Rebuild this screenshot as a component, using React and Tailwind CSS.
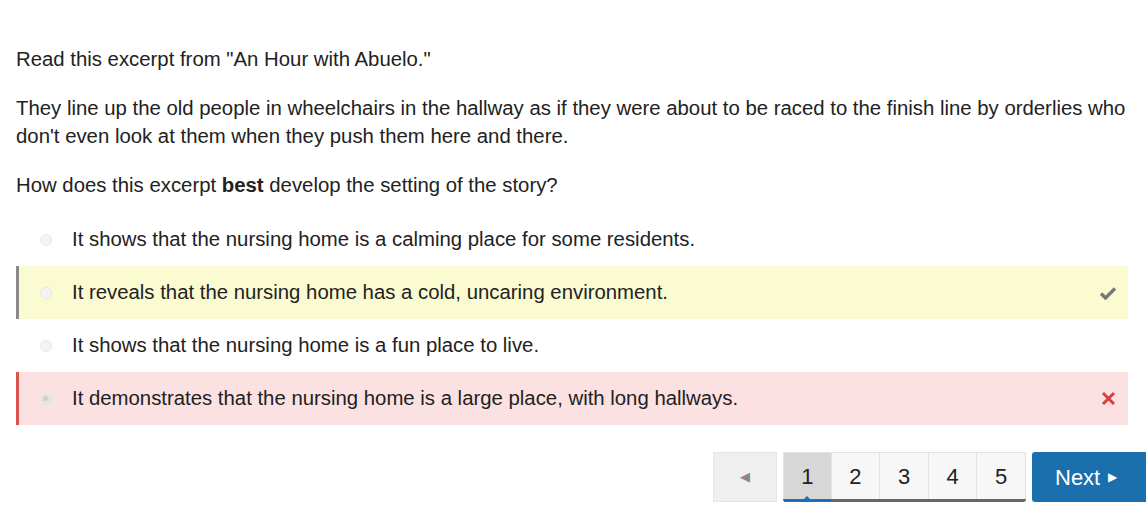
import React from 'react'

const options = [
  { text: 'It shows that the nursing home is a calming place for some residents.', state: 'none' },
  { text: 'It reveals that the nursing home has a cold, uncaring environment.', state: 'correct' },
  { text: 'It shows that the nursing home is a fun place to live.', state: 'none' },
  { text: 'It demonstrates that the nursing home is a large place, with long hallways.', state: 'wrong' },
]

function Option({ text, state }) {
  const rowCls =
    state === 'correct'
      ? 'bg-[#fbfbd2] border-l-[3px] border-[#8a8a8a]'
      : state === 'wrong'
      ? 'bg-[#fbe1e1] border-l-[3px] border-[#d9534f]'
      : 'border-l-[3px] border-transparent'
  return (
    <div className={`flex items-center h-[53px] ${rowCls}`}>
      <div className="w-[53px] flex justify-center shrink-0">
        <span
          className={`w-[12px] h-[12px] rounded-full border border-[#e8e8e8] ${
            state === 'wrong' ? 'bg-[#e4e4e4]' : 'bg-[#f4f4f4]'
          } flex items-center justify-center`}
        >
          {state === 'wrong' && <span className="w-[5px] h-[5px] rounded-full bg-[#cfcfcf]" />}
        </span>
      </div>
      <span className="flex-1">{text}</span>
      <div className="w-[40px] flex justify-center">
        {state === 'correct' && (
          <svg width="18" height="14" viewBox="0 0 18 14">
            <path d="M2 7.5 L6.5 12 L16 2.5" fill="none" stroke="#777" strokeWidth="3.4" />
          </svg>
        )}
        {state === 'wrong' && (
          <svg width="15" height="15" viewBox="0 0 15 15">
            <path d="M2 2 L13 13 M13 2 L2 13" fill="none" stroke="#d9403b" strokeWidth="3" />
          </svg>
        )}
      </div>
    </div>
  )
}

export default function App() {
  return (
    <div className="w-[1146px] h-[516px] bg-white text-[#222] text-[20.35px] font-['Liberation_Sans',Arial,sans-serif] overflow-hidden">
      <div className="pt-[45px] pl-4">
        <p className="leading-[28px]">Read this excerpt from "An Hour with Abuelo."</p>
        <p className="leading-[28px] mt-[21px]">
          They line up the old people in wheelchairs in the hallway as if they were about to be raced to the finish line by orderlies who don't even look at them when they push them here and there.
        </p>
        <p className="leading-[28px] mt-[21px]">
          How does this excerpt <b>best</b> develop the setting of the story?
        </p>
        <div className="mt-[14px] mr-[18px]">
          {options.map((o, i) => (
            <Option key={i} {...o} />
          ))}
        </div>
      </div>

      <div className="flex justify-end mt-[27px] gap-[6px]">
        <button className="w-[64px] h-[50px] bg-[#efefef] border border-[#e6e6e6] flex items-center justify-center">
          <span className="text-[#888] text-[13px]">◀</span>
        </button>
        <div className="flex border-b-[3px] border-[#666] rounded-b-[3px] h-[50px]">
          {[1, 2, 3, 4, 5].map((n) => (
            <div
              key={n}
              className={`relative w-[48.6px] h-full flex items-center justify-center text-[22px] border-t border-r border-[#e2e2e2] ${
                n === 1 ? 'bg-[#d7d7d7] border-l' : 'bg-[#f7f7f7]'
              }`}
            >
              {n}
              {n === 1 && (
                <>
                  <span className="absolute left-0 right-0 bottom-[-3px] h-[3px] bg-[#1f6fb2]" />
                  <span className="absolute bottom-0 left-1/2 -translate-x-1/2 w-0 h-0 border-l-[3px] border-r-[3px] border-b-[3px] border-l-transparent border-r-transparent border-b-[#1f6fb2]" />
                </>
              )}
            </div>
          ))}
        </div>
        <button className="w-[114px] h-[50px] bg-[#1b6fad] text-white text-[22px] rounded-l-[3px] flex items-center pl-[23px] gap-[8px]">
          Next <span className="text-[12px]">▶</span>
        </button>
      </div>
    </div>
  )
}
